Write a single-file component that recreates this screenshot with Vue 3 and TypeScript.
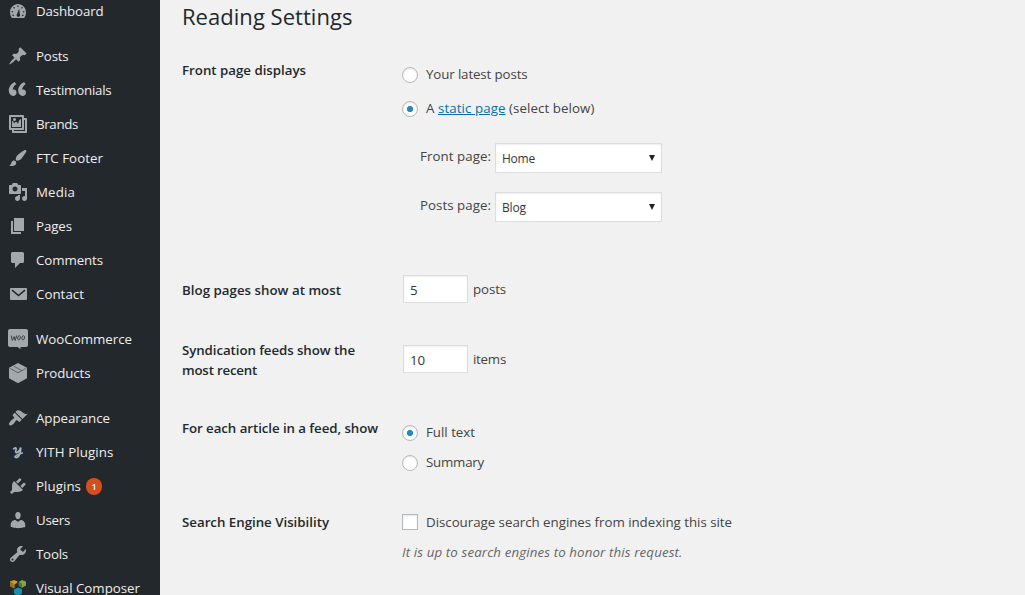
<script setup lang="ts">
import { reactive, type Directive } from 'vue'

interface MenuItem {
  label: string
  width: number
  icon: string
  path?: string
  gap?: boolean
  badge?: number
}

/* Spreads the letters of a line so that it fills the given width. */
const vFit: Directive<HTMLElement, number> = {
  mounted(el, { value }) {
    const count = (el.textContent ?? '').length
    const natural = el.getBoundingClientRect().width
    if (count > 1) el.style.letterSpacing = `${(value - natural) / count}px`
  },
}

const menu: MenuItem[] = [
  { label: 'Dashboard', width: 67.5, icon: 'path', path: 'M3.76 17h12.48A9.6 9.6 0 0 0 18 11.4C18 6.7 14.42 3 10 3S2 6.7 2 11.4A9.6 9.6 0 0 0 3.76 17zM10 4.4a.8.8 0 1 1 0 1.6a.8.8 0 1 1 0-1.6zM6 5.9a.8.8 0 1 1 0 1.6a.8.8 0 1 1 0-1.6zM14 5.9a.8.8 0 1 1 0 1.6a.8.8 0 1 1 0-1.6zM4.300 9.900a.8.8 0 1 1 0 1.600a.8.8 0 1 1 0-1.600zM15.700 9.900a.8.8 0 1 1 0 1.600a.8.8 0 1 1 0-1.600zM5.200 13.600a.8.8 0 1 1 0 1.600a.8.8 0 1 1 0-1.600zM14.800 13.600a.8.8 0 1 1 0 1.600a.8.8 0 1 1 0-1.600zM11.200 7.500l.6 5.500a1.800 1.800 0 1 1-2.600-.3z' },
  { label: 'Posts', width: 32.5, icon: 'path', gap: true, path: 'M10.44 3.02l1.82-1.82 6.36 6.35-1.83 1.82c-1.05-.68-2.48-.57-3.41.36l-.75.75c-.92.93-1.04 2.35-.35 3.41l-1.83 1.82-2.41-2.41-2.8 2.79c-.42.42-3.38 2.71-3.8 2.29s1.86-3.39 2.28-3.81l2.79-2.79L4.1 9.36l1.83-1.82c1.05.69 2.48.57 3.4-.36l.75-.75c.93-.92 1.05-2.35.36-3.41z' },
  { label: 'Testimonials', width: 75.5, icon: 'quote', path: 'M8.54 12.74c0-.87-.24-1.61-.72-2.22-.73-.92-2.14-1.03-2.96-.85-.34-1.93 1.3-4.39 3.42-5.45L6.65 1.94C3.46 3.46.31 6.96.85 11.37 1.19 14.16 2.8 16 5.08 16c1 0 1.83-.29 2.48-.88.66-.59.98-1.38.98-2.38zm9.43 0c0-.87-.24-1.61-.72-2.22-.73-.92-2.14-1.03-2.96-.85-.34-1.93 1.3-4.39 3.42-5.45l-1.63-2.28c-3.2 1.52-6.34 5.02-5.8 9.43.34 2.79 1.95 4.63 4.23 4.63 1 0 1.83-.29 2.48-.88.66-.59.98-1.38.98-2.38z' },
  { label: 'Brands', width: 42, icon: 'path', path: 'M16 4h1.96c.57 0 1.04.47 1.04 1.04v12.92c0 .57-.47 1.04-1.04 1.04H5.04C4.47 19 4 18.53 4 17.96V16H2.04C1.47 16 1 15.53 1 14.96V2.04C1 1.47 1.47 1 2.04 1h12.92c.57 0 1.04.47 1.04 1.04V4zM3 14h11V3H3v11zm5-8.5C8 4.67 7.33 4 6.5 4S5 4.67 5 5.5 5.67 7 6.5 7 8 6.33 8 5.5zm2 4.5s1-5 3-5v8H4V7c2 0 2 3 2 3s.33-2 2-2 2 2 2 2zm7 7V6h-1v8.96c0 .57-.47 1.04-1.04 1.04H6v1h11z' },
  { label: 'FTC Footer', width: 67, icon: 'path', path: 'M18.33 3.57s.27-.8-.31-1.36c-.53-.52-1.22-.24-1.22-.24-.61.3-5.76 3.47-7.67 5.57-.86.96-2.06 3.79-1.09 4.82.92.98 3.96-.17 4.79-1 2.06-2.06 5.21-7.17 5.5-7.79zM1.4 17.65c2.37-1.56 1.46-3.41 3.23-4.64.93-.65 2.22-.62 3.08.29.63.67.8 2.57-.16 3.46-1.57 1.45-4 1.55-6.15.89z' },
  { label: 'Media', width: 39, icon: 'path', path: 'M13 11V4c0-.55-.45-1-1-1h-1.67L9 1H5L3.67 3H2c-.55 0-1 .45-1 1v7c0 .55.45 1 1 1h10c.55 0 1-.45 1-1zM7 4.5c1.38 0 2.5 1.12 2.5 2.5S8.38 9.5 7 9.5 4.5 8.38 4.5 7 5.62 4.5 7 4.5zM14 6h5v10.5c0 1.38-1.12 2.5-2.5 2.5S14 17.88 14 16.5s1.12-2.5 2.5-2.5c.17 0 .34.02.5.05V9h-3V6zm-4 8.05V13h2v3.5c0 1.38-1.12 2.5-2.5 2.5S7 17.88 7 16.5 8.12 14 9.5 14c.17 0 .34.02.5.05z' },
  { label: 'Pages', width: 36, icon: 'path', path: 'M6 15V2h10v13H6zm-1 1h8v2H3V5h2v11z' },
  { label: 'Comments', width: 67, icon: 'path', path: 'M4.500 2h10A1.500 1.500 0 0 1 16 3.500v8a1.500 1.500 0 0 1-1.500 1.500H12l-5 5v-5H4.500A1.500 1.500 0 0 1 3 11.500v-8A1.500 1.500 0 0 1 4.500 2z' },
  { label: 'Contact', width: 48, icon: 'mail' },
  { label: 'WooCommerce', width: 96, icon: 'woo', gap: true },
  { label: 'Products', width: 54.5, icon: 'cube' },
  { label: 'Appearance', width: 74, icon: 'path', gap: true, path: 'M14.48 11.06L7.41 3.99l1.5-1.5c.5-.56 2.3-.47 3.51.32 1.21.8 1.43 1.28 2.91 2.1 1.18.64 2.45 1.26 4.45.85zm-.71.71L6.7 4.7 4.93 6.47c-.39.39-.39 1.02 0 1.41l1.06 1.06c.39.39.39 1.03 0 1.42-.6.6-1.43 1.11-2.21 1.69-.35.26-.7.53-1.01.84C1.43 14.23.4 16.08 1.4 17.07c.99 1 2.84-.03 4.18-1.36.31-.31.58-.66.85-1.02.57-.78 1.08-1.61 1.69-2.21.39-.39 1.02-.39 1.41 0l1.06 1.06c.39.39 1.02.39 1.41 0z' },
  { label: 'YITH Plugins', width: 77.5, icon: 'yith' },
  { label: 'Plugins', width: 45, icon: 'path', badge: 1, path: 'M13.11 4.36L9.87 7.6 8 5.73l3.24-3.24c.35-.34 1.05-.2 1.56.32.52.51.66 1.21.31 1.55zm-8 1.77l.91-1.12 9.01 9.01-1.19.84c-.71.71-2.63 1.16-3.82 1.16H6.14L4.9 17.26c-.59.59-1.54.59-2.12 0-.59-.58-.59-1.53 0-2.12l1.24-1.24v-3.88c0-1.13.4-3.19 1.09-3.89zm7.26 3.97l3.24-3.24c.34-.35 1.04-.21 1.55.31.52.51.66 1.21.31 1.55l-3.24 3.25z' },
  { label: 'Users', width: 34, icon: 'path', path: 'M10 9.25c-2.27 0-2.73-3.44-2.73-3.44C7 4.02 7.82 2 9.97 2c2.16 0 2.98 2.02 2.71 3.81 0 0-.41 3.44-2.68 3.44zm0 2.57L12.72 10c2.39 0 4.52 2.33 4.52 4.53v2.49s-3.65 1.13-7.24 1.13c-3.65 0-7.24-1.13-7.24-1.13v-2.49c0-2.25 1.94-4.48 4.47-4.48z' },
  { label: 'Tools', width: 32, icon: 'path', path: 'M16.68 9.77c-1.34 1.34-3.3 1.67-4.95.99l-5.41 6.52c-.99.99-2.59.99-3.58 0s-.99-2.59 0-3.57l6.52-5.42c-.68-1.65-.35-3.61.99-4.95 1.28-1.28 3.12-1.62 4.72-1.06l-2.89 2.89 2.82 2.82 2.86-2.87c.53 1.58.18 3.39-1.08 4.65zM3.81 16.21c.4.39 1.04.39 1.43 0 .4-.4.4-1.04 0-1.43-.39-.4-1.03-.4-1.43 0-.39.39-.39 1.03 0 1.43z' },
  { label: 'Visual Composer', width: 104, icon: 'blocks' },
]

const form = reactive({ front: 'page', posts: '5', items: '10', feed: 'full', discourage: false })
</script>

<template>
  <div class="admin">
    <nav class="sidebar">
      <a v-for="item in menu" :key="item.label" class="item" :class="{ gap: item.gap }">
        <svg class="icon" viewBox="0 0 20 20" fill="#a3a8ac">
          <path v-if="item.path" :d="item.path" fill-rule="evenodd" />
          <template v-else-if="item.icon === 'mail'">
            <rect x="2" y="4" width="17" height="12" rx="1" />
            <path d="M4 6.200l6.500 5.300L17 6.200" fill="none" stroke="#23282d" stroke-width="1.500" />
          </template>
          <template v-else-if="item.icon === 'woo'">
            <path d="M2 0h16a2 2 0 0 1 2 2v14a2 2 0 0 1-2 2h-5.500v2.300L9.500 18H2a2 2 0 0 1-2-2V2a2 2 0 0 1 2-2z" />
            <path d="M3.200 6.500l1.100 5 1.900-4 1 4 1.500-5" fill="none" stroke="#3b4045" stroke-width="1" />
            <ellipse cx="11" cy="8.800" rx="1.300" ry="2.100" transform="rotate(12 11 8.800)" fill="none" stroke="#3b4045" stroke-width=".9" />
            <ellipse cx="15.200" cy="8.800" rx="1.300" ry="2.100" transform="rotate(12 15.200 8.800)" fill="none" stroke="#3b4045" stroke-width=".9" />
          </template>
          <template v-else-if="item.icon === 'cube'">
            <path d="M10 0l9 4.800v10.400L10 20.300l-9-5.100V4.800z" />
            <path d="M1.800 5.300L10 9.800 18.200 5.300M5.800 3.200l8.200 4.400" fill="none" stroke="#3b4045" stroke-width=".65" />
          </template>
          <template v-else-if="item.icon === 'yith'">
            <circle cx="10" cy="10" r="8" fill="#1e2935" />
            <path d="M5.600 6.800Q8.400 4.600 8.200 7.200Q6.800 10.600 8.800 10.600Q11.200 10 12.800 5.600Q12.600 12.500 10 14.800Q7.600 16.600 7 14.800Q7.600 13 14.300 11" fill="none" stroke="#a7b0b7" stroke-width="1.700" stroke-linecap="round" />
          </template>
          <template v-else>
            <path d="M2 3.500L6 2l3.500 1.500L9 5 6.500 6.500v4L2 8z" fill="#d19b22" />
            <path d="M2 3.500l3.700 2v5L2 8z" fill="#98711d" />
            <path d="M10.500 4L14 2l4 1.500v4L13.500 10V6z" fill="#83a43f" />
            <path d="M10.500 4L14 5.800v4L10.500 8z" fill="#54743b" />
            <path d="M6 11.500l4-2 4 1.500v4.500L10 18l-4-2.500z" fill="#168fb3" />
          </template>
        </svg>
        <span v-fit="item.width">{{ item.label }}</span>
        <b v-if="item.badge" class="badge">{{ item.badge }}</b>
      </a>
    </nav>

    <main class="content">
      <h1><span v-fit="170.5">Reading Settings</span></h1>

      <section class="row front">
        <h2><span v-fit="124">Front page displays</span></h2>
        <div class="field">
          <label class="choice">
            <input v-model="form.front" type="radio" name="front" value="posts" />
            <span v-fit="101.5">Your latest posts</span>
          </label>
          <label class="choice static">
            <input v-model="form.front" type="radio" name="front" value="page" />
            <span v-fit="168.5">A <a class="link">static page</a> (select below)</span>
          </label>
          <div class="picker">
            <span v-fit="71">Front page:</span>
            <div class="select"><span v-fit="33">Home</span><i class="arrow"></i></div>
          </div>
          <div class="picker">
            <span v-fit="71">Posts page:</span>
            <div class="select"><span v-fit="24">Blog</span><i class="arrow"></i></div>
          </div>
        </div>
      </section>

      <section class="row pages">
        <h2><span v-fit="159">Blog pages show at most</span></h2>
        <div class="amount">
          <input v-model="form.posts" type="text" /><span v-fit="33">posts</span>
        </div>
      </section>

      <section class="row feeds">
        <h2><span v-fit="173">Syndication feeds show the</span><br /><span v-fit="75">most recent</span></h2>
        <div class="amount">
          <input v-model="form.items" type="text" /><span v-fit="33">items</span>
        </div>
      </section>

      <section class="row articles">
        <h2><span v-fit="196">For each article in a feed, show</span></h2>
        <div class="field">
          <label class="choice">
            <input v-model="form.feed" type="radio" name="feed" value="full" />
            <span v-fit="49">Full text</span>
          </label>
          <label class="choice">
            <input v-model="form.feed" type="radio" name="feed" value="summary" />
            <span v-fit="58">Summary</span>
          </label>
        </div>
      </section>

      <section class="row visibility">
        <h2><span v-fit="147">Search Engine Visibility</span></h2>
        <div class="field">
          <label class="choice">
            <input v-model="form.discourage" type="checkbox" />
            <span v-fit="306">Discourage search engines from indexing this site</span>
          </label>
          <p class="note"><span v-fit="280.5">It is up to search engines to honor this request.</span></p>
        </div>
      </section>
    </main>
  </div>
</template>

<style>
body {
  margin: 0;
  background: #f1f1f1;
}
</style>

<style scoped>
.admin {
  display: flex;
  height: 595px;
  overflow: hidden;
  background: #f1f1f1;
  color: #444;
  font: 13.3px/20px "Segoe UI", "Open Sans", "Noto Sans", sans-serif;
  white-space: nowrap;
}
.sidebar {
  flex: none;
  width: 160px;
  margin-top: -6px;
  background: #23282d;
  color: #eee;
}
.item {
  display: flex;
  align-items: center;
  height: 34px;
  padding-left: 8px;
}
.item.gap {
  margin-top: 11px;
}
.icon {
  flex: none;
  width: 20px;
  height: 20px;
  margin-right: 8px;
  overflow: visible;
}
.badge {
  width: 16px;
  height: 17px;
  margin-left: 5px;
  border-radius: 9px;
  background: #d54e21;
  color: #fff;
  font-size: 9px;
  font-weight: 600;
  line-height: 17px;
  text-align: center;
}
.content {
  flex: 1;
  padding-left: 22px;
}
h1 {
  height: 60px;
  margin: 0;
  color: #23282d;
  font-size: 22px;
  font-weight: 400;
  line-height: 32px;
}
.row {
  display: grid;
  grid-template-columns: 220px 1fr;
  align-items: start;
}
h2 {
  margin: 0;
  color: #23282d;
  font-size: 13.3px;
  font-weight: 600;
  line-height: 20px;
}
.front {
  height: 215px;
}
.front .field {
  padding-top: 5px;
}
.pages {
  height: 70px;
}
.pages h2 {
  padding-top: 5px;
}
.feeds {
  height: 73px;
}
.feeds h2 {
  margin-top: -5px;
}
.articles {
  height: 94px;
}
.articles .field {
  padding-top: 5px;
}
.choice {
  display: flex;
  align-items: center;
  height: 20px;
}
.front .choice span,
.articles .choice span {
  padding-bottom: 2px;
}
.choice + .choice {
  margin-top: 10px;
}
.choice.static {
  margin-top: 14px;
}
.choice input {
  appearance: none;
  box-sizing: border-box;
  width: 16px;
  height: 16px;
  margin: 0 8px 0 0;
  border: 1px solid #b4b9be;
  background: #fff;
  box-shadow: inset 0 1px 2px rgba(0, 0, 0, 0.1);
}
.choice input[type="radio"] {
  border-radius: 50%;
}
.choice input[type="radio"]:checked {
  background: radial-gradient(circle, #1e8cbe 2.700px, #fff 3.500px);
}
.link {
  color: #0073aa;
  text-decoration: underline;
}
.picker {
  display: flex;
  margin: 24px 0 0 18px;
  line-height: 27px;
}
.picker + .picker {
  margin-top: 19px;
}
.select {
  display: flex;
  box-sizing: border-box;
  align-items: center;
  justify-content: space-between;
  width: 167px;
  height: 30px;
  margin-left: 4px;
  padding: 1px 6px 0;
  border: 1px solid #ddd;
  background: #fff;
  box-shadow: inset 0 1px 2px rgba(0, 0, 0, 0.07);
  color: #32373c;
  font-size: 12px;
}
.arrow {
  width: 0;
  margin-top: -2px;
  border-top: 6px solid #222;
  border-right: 3px solid transparent;
  border-left: 3px solid transparent;
}
.amount {
  display: flex;
  align-items: center;
  height: 28px;
}
.amount input {
  box-sizing: border-box;
  width: 65px;
  height: 28px;
  margin: 0 5px 0 1px;
  padding: 2px 6px 0;
  border: 1px solid #ddd;
  border-radius: 0;
  background: #fff;
  box-shadow: inset 0 1px 2px rgba(0, 0, 0, 0.07);
  color: #32373c;
  font: inherit;
}
.note {
  margin: 10px 0 0;
  color: #666;
  font-style: italic;
}
</style>
